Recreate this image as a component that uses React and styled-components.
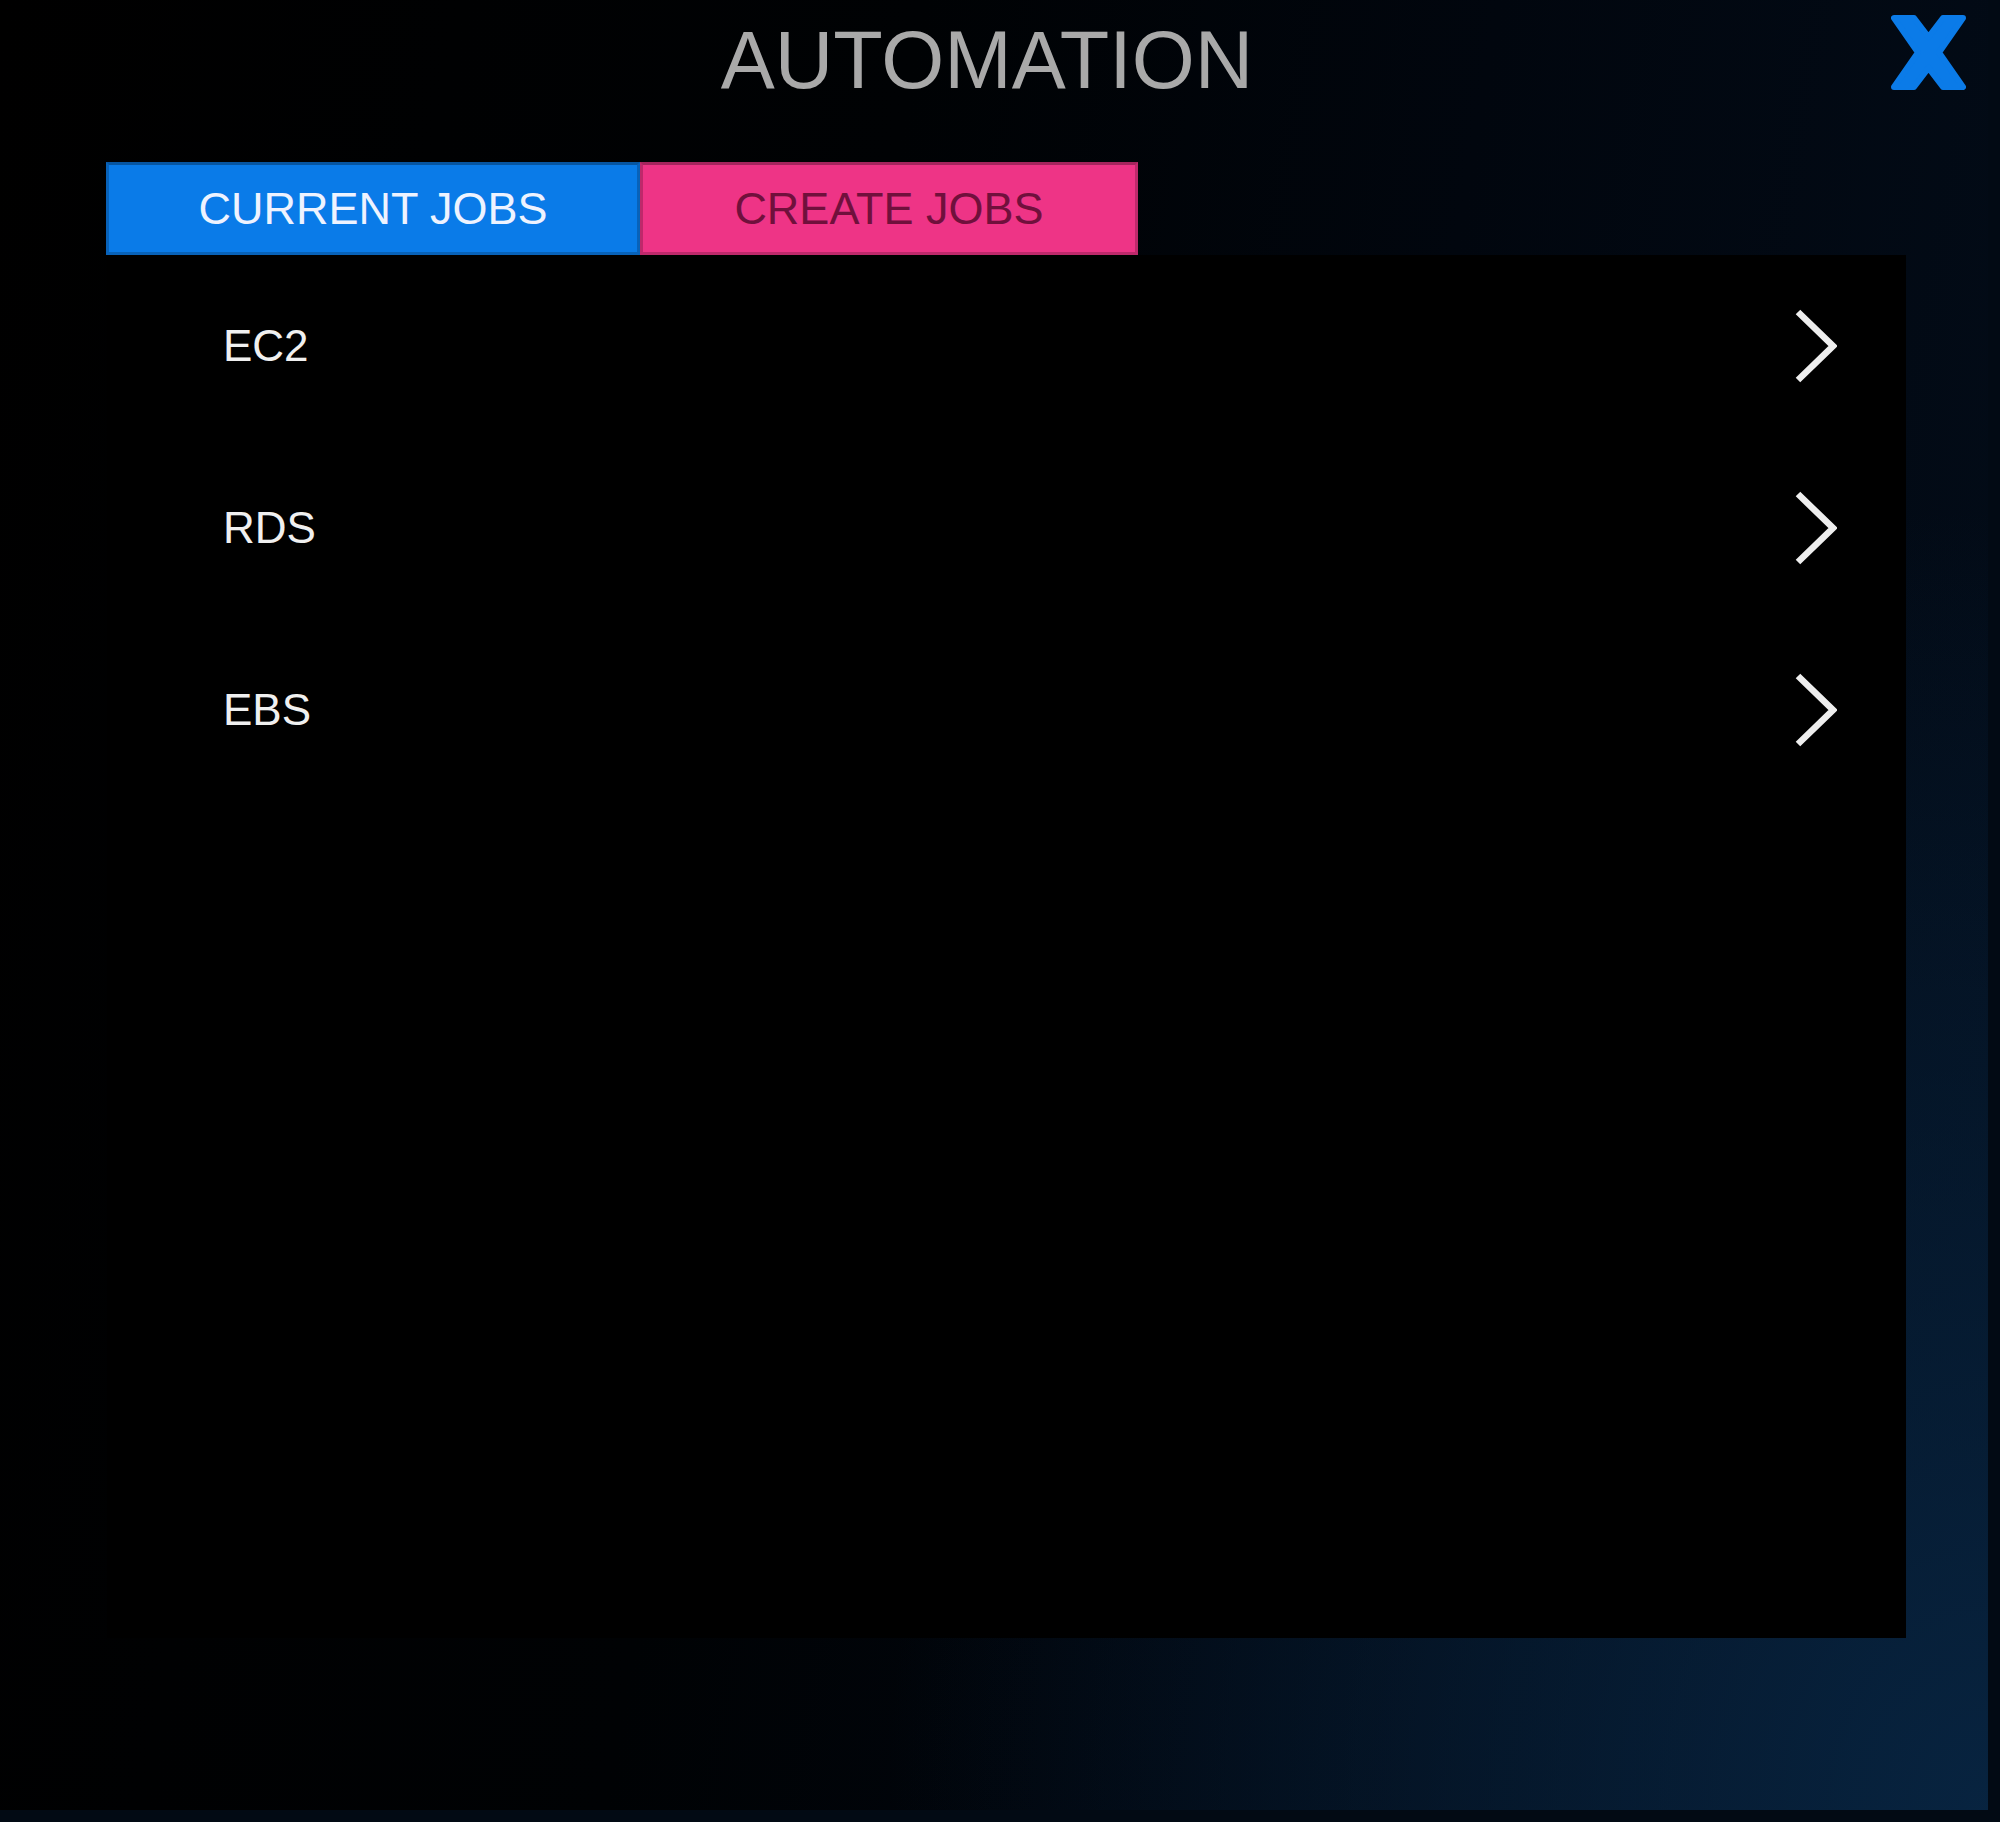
import React, { useState } from "react";
import styled, { createGlobalStyle } from "styled-components";

const GlobalStyle = createGlobalStyle`
  html, body {
    margin: 0;
    padding: 0;
    background: #020a14;
  }
  body {
    font-family: "Liberation Sans", Arial, sans-serif;
  }
`

const Page = styled.div`
  width: 2000px;
  height: 1822px;
  overflow: hidden;
  background: #020a14;
`
const Overlay = styled.div`
  position: relative;
  width: 1988px;
  height: 1810px;
  display: flex;
  flex-direction: column;
  background:
    radial-gradient(ellipse 1100px 1300px at 100% 100%, rgba(8, 38, 68, 0.9), rgba(8, 38, 68, 0) 100%),
    linear-gradient(100deg, #000 0%, #000204 40%, #01060e 65%, #030d1a 100%);
`
const Header = styled.header`
  height: 162px;
  display: flex;
  justify-content: center;
  align-items: flex-start;
  padding-right: 14px;
  box-sizing: border-box;
`
const Title = styled.h1`
  margin: 20px 0 0;
  font-size: 81px;
  line-height: 81px;
  font-weight: normal;
  color: #a9a9a9;
`
const CloseButton = styled.button`
  position: absolute;
  top: 15px;
  right: 22px;
  width: 75px;
  height: 75px;
  padding: 0;
  border: none;
  background: transparent;
  cursor: pointer;
`
const TabRow = styled.div`
  display: flex;
  margin-left: 106px;
  height: 93px;
`
const Tab = styled.button`
  box-sizing: border-box;
  height: 93px;
  width: ${props => props.width}px;
  border: 3px solid rgba(0, 0, 0, 0.2);
  border-top-color: rgba(0, 0, 0, 0.3);
  background: ${props => props.active ? "#0a7be8" : "#ee3486"};
  color: ${props => props.active ? "#eef3ff" : "#70103c"};
  font-family: "Liberation Sans", Arial, sans-serif;
  font-size: 45px;
  padding: 0;
  cursor: pointer;
`
const Panel = styled.div`
  margin-left: 107px;
  width: 1799px;
  height: 1383px;
  background: #000;
  display: flex;
  flex-direction: column;
`
const Row = styled.div`
  height: 182px;
  display: flex;
  align-items: center;
  justify-content: space-between;
  padding: 0 69px 0 116px;
  cursor: pointer;
`
const RowLabel = styled.span`
  font-size: 44px;
  color: #f0f0f0;
`

const CloseIcon = () => (
  <svg width="75" height="75" viewBox="0 0 75 75">
    <polygon
      points="3,3 23,3 37.5,22 52,3 72,3 48,37.5 72,72 52,72 37.5,53 23,72 3,72 27,37.5"
      fill="#0b7be8"
      stroke="#0b7be8"
      strokeWidth="6"
      strokeLinejoin="round"
    />
  </svg>
)

const Chevron = () => (
  <svg width="42" height="74" viewBox="0 0 42 74">
    <polyline points="3,3 38,37 3,71" fill="none" stroke="#eeeeee" strokeWidth="6.5" />
  </svg>
)

const services = ["EC2", "RDS", "EBS"];

const App = () => {
  const [tab, setTab] = useState("current");

  return (
    <Page>
      <GlobalStyle />
      <Overlay>
        <Header>
          <Title>AUTOMATION</Title>
        </Header>
        <CloseButton aria-label="Close">
          <CloseIcon />
        </CloseButton>

        <TabRow>
          <Tab width={534} active onClick={() => setTab("current")}>CURRENT JOBS</Tab>
          <Tab width={498} onClick={() => setTab("create")}>CREATE JOBS</Tab>
        </TabRow>

        <Panel>
          {services.map(name => (
            <Row key={name}>
              <RowLabel>{name}</RowLabel>
              <Chevron />
            </Row>
          ))}
        </Panel>
      </Overlay>
    </Page>
  )
}

export default App
